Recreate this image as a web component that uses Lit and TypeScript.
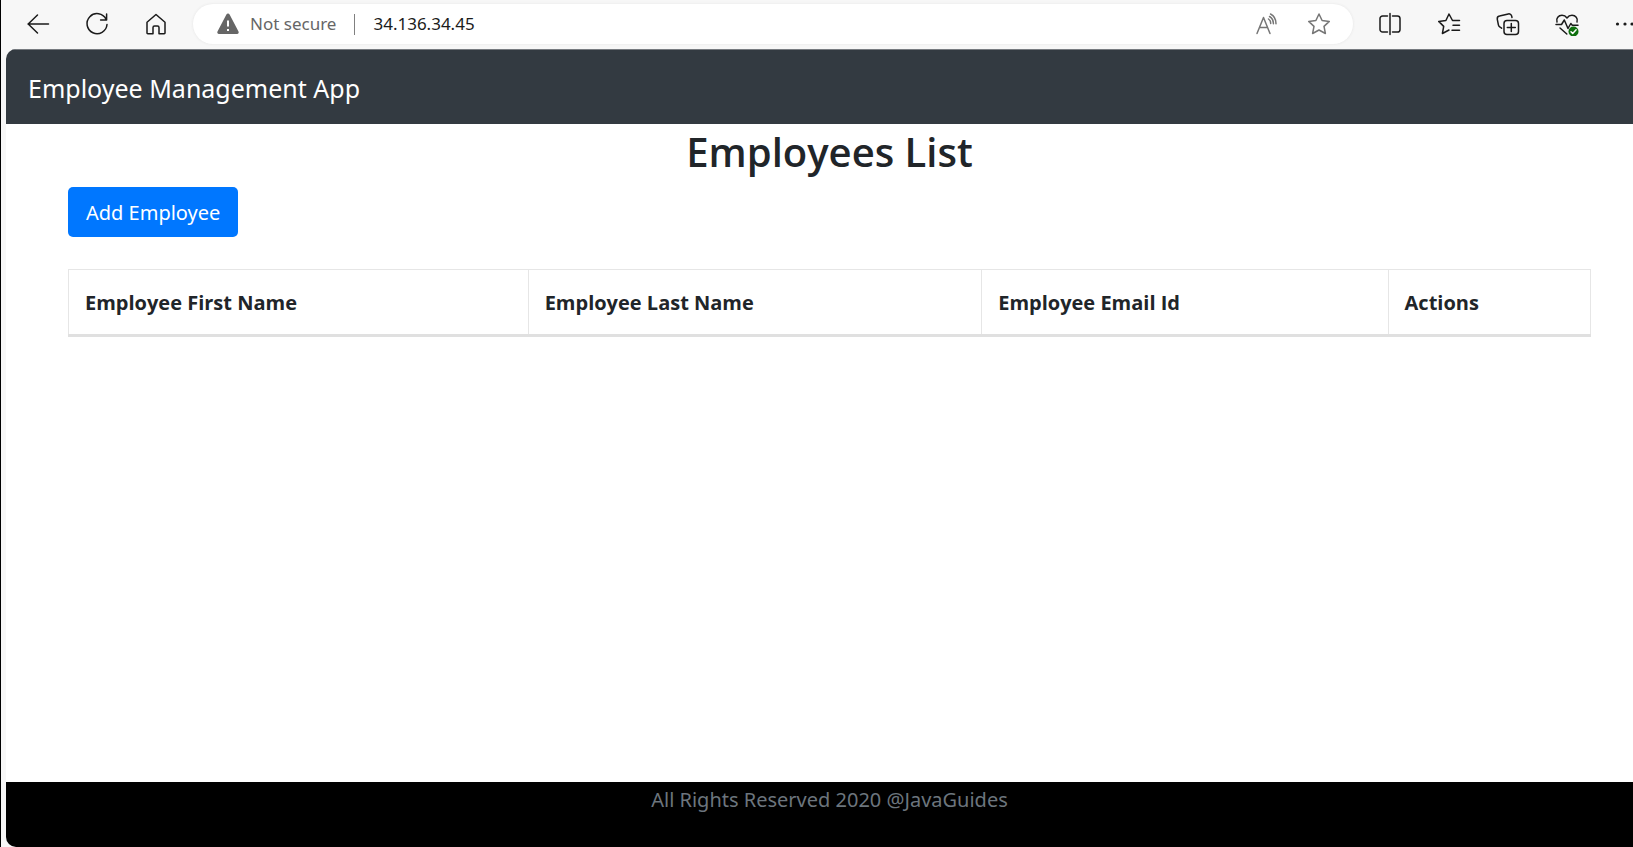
import { LitElement, html, css, svg } from "lit";
import { customElement } from "lit/decorators.js";

const icon = (body: unknown, size = 24) =>
  html`<svg class="icon" width=${size} height=${size} viewBox="0 0 24 24" aria-hidden="true">${body}</svg>`;

const icons = {
  back: svg`<path d="M22.500 12H2M11.500 3 2.200 12l9.300 9"/>`,
  reload: svg`<path d="M21 7.200A10 10 0 1 0 22 12.500M21.600 2v6h-6"/>`,
  home: svg`<path d="M3 10.200 12 2.500l9 7.700V21a.8.8 0 0 1-.8.800H15v-6.300a1.500 1.500 0 0 0-1.500-1.500h-3A1.500 1.500 0 0 0 9 15.500v6.300H3.800A.8.800 0 0 1 3 21Z"/>`,
  warning: svg`<path class="solid" d="M10.400 2.600a1.800 1.800 0 0 1 3.200 0l8.900 17a1.600 1.600 0 0 1-1.500 2.400H3a1.600 1.600 0 0 1-1.500-2.400Z"/><path class="mark" d="M12 8.500v6M12 17v2"/>`,
  read: svg`<path d="M2 21.500 8.500 5.500l6.500 16M4.500 15.500h8M13.500 7c1.500 1 2.300 2.500 2.200 4.500M14.500 4.500c2.600 1.400 4 4 3.900 7.200M15.500 2c3.500 1.800 5.500 5.200 5.500 9.700"/>`,
  star: svg`<path d="m12 2 3.100 6.500 7.200.9-5.300 5 1.400 7.100L12 18l-6.400 3.500L7 14.400l-5.300-5 7.200-.9Z"/>`,
  split: svg`<path d="M9.500 4H4.600A2.600 2.600 0 0 0 2 6.600v10.800A2.600 2.600 0 0 0 4.600 20h4.900M14.500 4h4.900A2.600 2.600 0 0 1 22 6.600v10.800a2.600 2.600 0 0 1-2.600 2.600h-4.900M12 1.500v21"/>`,
  favorites: svg`<path d="M22.500 8.500h-7L12 2 8.900 8.500l-7.200.9 5 5L5.400 21.500 12 18M16 13.300h6.500M15 18.300h7.500"/>`,
  collections: svg`<path d="M5.600 16.200 3.900 15a3 3 0 0 1-1.500-2.200L1.300 7.300a2.800 2.800 0 0 1 2.200-3.200l8.800-2.200a2.800 2.800 0 0 1 3.400 2.200l.3 1.400"/><rect x="8" y="8.500" width="14.500" height="14" rx="3"/><path d="M15.300 11.500v8M11.300 15.500h8"/>`,
  health: svg`<path d="M2 10C.8 6 3.500 3.300 7 3.300c2.200 0 3.800 1 5 2.700 1.200-1.700 2.800-2.700 5-2.700 3.500 0 6.200 2.700 5 6.700M1 12.500h5.500l2.800-4.500 3.700 8.500 2.800-5 1.500 1.800H23M5 16l6.800 6"/><circle class="badge" cx="18.500" cy="19.500" r="5"/><path class="tick" d="m16 19.700 1.700 1.700 3.400-3.600"/>`,
  more: svg`<circle class="solid" cx="4.500" cy="12" r="1.600"/><circle class="solid" cx="12" cy="12" r="1.600"/><circle class="solid" cx="19" cy="12" r="1.600"/>`,
};

@customElement("browser-bar")
class BrowserBar extends LitElement {
  static styles = css`
    :host {
      display: flex;
      align-items: center;
      box-sizing: border-box;
      height: 49px;
      padding: 0 0 1px 7px;
      overflow: hidden;
      background: #f7f7f7;
      font: 17px/24px "Noto Sans", "Open Sans", sans-serif;
    }
    .tool {
      display: flex;
      flex: none;
      align-items: center;
      justify-content: center;
      width: 59px;
      height: 40px;
      padding: 0;
      border: 0;
      background: none;
      color: #1b1b1b;
    }
    .tool.inner {
      width: 52px;
      color: #767676;
    }
    .tool.last {
      justify-content: flex-start;
      width: 37px;
      padding-left: 17px;
      overflow: hidden;
    }
    .icon {
      flex: none;
      fill: none;
      stroke: currentColor;
      stroke-width: 1.5;
      stroke-linejoin: round;
      stroke-linecap: round;
    }
    .solid {
      fill: currentColor;
      stroke: none;
    }
    .mark {
      stroke: #fff;
      stroke-width: 2;
      stroke-linecap: butt;
    }
    .badge {
      fill: #0e700e;
      stroke: none;
    }
    .tick {
      stroke: #fff;
    }
    .address {
      display: flex;
      flex: 1;
      align-items: center;
      min-width: 0;
      height: 40px;
      margin: 0 7px 0 8px;
      padding: 0 8px 0 23px;
      box-sizing: border-box;
      border-radius: 20px;
      background: #fff;
      box-shadow: 0 0 3px #e4e4e4;
    }
    .security {
      display: flex;
      align-items: center;
      gap: 10px;
      color: #666;
      white-space: nowrap;
    }
    .divider {
      width: 1px;
      height: 21px;
      margin: 0 18px;
      background: #808080;
    }
    .url {
      flex: 1;
      min-width: 0;
      padding: 0;
      border: 0;
      outline: 0;
      background: none;
      color: #1b1b1b;
      font: inherit;
    }
  `;

  render() {
    return html`
      <button class="tool" aria-label="Back">${icon(icons.back)}</button>
      <button class="tool" aria-label="Refresh">${icon(icons.reload)}</button>
      <button class="tool" aria-label="Home">${icon(icons.home)}</button>
      <div class="address">
        <span class="security">${icon(icons.warning)}Not secure</span>
        <span class="divider"></span>
        <input class="url" aria-label="Address" .value=${"34.136.34.45"} />
        <button class="tool inner" aria-label="Read aloud">${icon(icons.read)}</button>
        <button class="tool inner" aria-label="Add to favorites">${icon(icons.star)}</button>
      </div>
      <button class="tool" aria-label="Split screen">${icon(icons.split)}</button>
      <button class="tool" aria-label="Favorites">${icon(icons.favorites)}</button>
      <button class="tool" aria-label="Collections">${icon(icons.collections)}</button>
      <button class="tool" aria-label="Browser essentials">${icon(icons.health)}</button>
      <button class="tool last" aria-label="More">${icon(icons.more)}</button>
    `;
  }
}

@customElement("app-root")
class AppRoot extends LitElement {
  static styles = css`
    :host {
      display: flex;
      flex-direction: column;
      box-sizing: border-box;
      min-height: 100vh;
      border-left: 1px solid #000;
      background: #f7f7f7;
      color: #212529;
      font: 20px/32px "Noto Sans", "Open Sans", sans-serif;
    }
    .page {
      display: flex;
      flex: 1;
      flex-direction: column;
      margin-left: 5px;
      overflow: hidden;
      border-radius: 10px 0 0 10px;
      background: #fff;
    }
    .navbar {
      padding: 22px 22px 20px;
      background: #333a41;
      border-top: 1px solid #777b80;
    }
    .brand {
      display: block;
      color: #fff;
      font-size: 25px;
      text-decoration: none;
    }
    .content {
      flex: 1;
      padding: 1px 42px 0 62px;
    }
    .title {
      margin: 0 0 8px;
      font-family: "Open Sans", "Noto Sans", sans-serif;
      font-size: 40px;
      font-weight: 600;
      line-height: 54px;
      text-align: center;
    }
    .add {
      display: block;
      margin: 0 0 32px;
      padding: 10px 18px 8px;
      border: 0;
      border-radius: 5px;
      background: #0077ff;
      color: #fff;
      font: inherit;
    }
    .employees {
      width: 100%;
      border: 1px solid #e6e6e6;
      border-collapse: collapse;
      table-layout: fixed;
    }
    .employees th {
      box-sizing: border-box;
      padding: 17px 16px 15px;
      border: 1px solid #e6e6e6;
      border-bottom: 3px solid #e0e0e0;
      font-family: "Open Sans", "Noto Sans", sans-serif;
      font-weight: 700;
      text-align: left;
    }
    .first {
      width: 30.2%;
    }
    .last {
      width: 29.8%;
    }
    .email {
      width: 26.7%;
    }
    .footer {
      height: 65px;
      padding: 0 42px 0 62px;
      background: #000;
      color: #6c757d;
      line-height: 36px;
      text-align: center;
    }
  `;

  render() {
    return html`
      <browser-bar></browser-bar>
      <div class="page">
        <header class="navbar"><a class="brand" href="#">Employee Management App</a></header>
        <main class="content">
          <h2 class="title">Employees List</h2>
          <button class="add">Add Employee</button>
          <table class="employees">
            <thead>
              <tr>
                <th class="first">Employee First Name</th>
                <th class="last">Employee Last Name</th>
                <th class="email">Employee Email Id</th>
                <th>Actions</th>
              </tr>
            </thead>
            <tbody></tbody>
          </table>
        </main>
        <footer class="footer">All Rights Reserved 2020 @JavaGuides</footer>
      </div>
    `;
  }
}
